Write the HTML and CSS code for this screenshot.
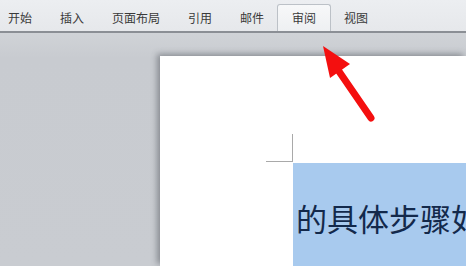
FILE: index.html
```html
<!DOCTYPE html>
<html lang="zh-CN">
<head>
    <meta charset="UTF-8">
    <meta name="viewport" content="width=device-width, initial-scale=1.0">
    <title>审阅</title>
    <link rel="stylesheet" href="styles.css">
</head>
<body>
    <div class="ribbon">
        <div class="tab">开始</div>
        <div class="tab">插入</div>
        <div class="tab">页面布局</div>
        <div class="tab">引用</div>
        <div class="tab">邮件</div>
        <div class="tab active">审阅</div>
        <div class="tab">视图</div>
    </div>
    <div class="workspace">
        <div class="page">
            <div class="crop-mark"></div>
            <div class="selection">的具体步骤如</div>
        </div>
    </div>

    <svg class="arrow" width="466" height="266" viewBox="0 0 466 266">
        <line x1="371" y1="118" x2="336" y2="67" stroke="#f40f0f" stroke-width="7" stroke-linecap="round"/>
        <polygon points="323,46 350,64 330,78" fill="#f40f0f"/>
    </svg>
</body>
</html>
```

FILE: styles.css
```css
body {
    margin: 0;
    width: 466px;
    height: 266px;
    overflow: hidden;
    font-family: "Noto Sans CJK SC", "Noto Sans", sans-serif;
    background: #c9ccd1;
}
.ribbon {
    display: flex;
    align-items: flex-end;
    height: 31px;
    margin-left: -7px;
    background: linear-gradient(#eceef1, #e6e8eb);
    border-bottom: 2px solid #8b8f95;
}
.tab {
    height: 26px;
    line-height: 25px;
    padding: 0 14px;
    font-size: 12px;
    color: #3a3a3a;
    border: 1px solid transparent;
    border-bottom: none;
    margin-right: -2px;
}
.tab.active {
    background: linear-gradient(#f7f8f9, #eef0f2);
    border-color: #bcc1c7;
    border-radius: 3px 3px 0 0;
}
.workspace {
    height: 233px;
    padding: 23px 0 0 160px;
    box-sizing: border-box;
    background: linear-gradient(#d0d3d7, #c8cbd0 25px, #c9ccd1);
}
.page {
    height: 100%;
    background: #ffffff;
    padding-top: 78px;
    box-sizing: border-box;
    overflow: hidden;
    box-shadow: -3px -2px 6px rgba(60, 64, 70, 0.45);
}
.crop-mark {
    width: 26px;
    height: 27px;
    margin-left: 106px;
    border-right: 1px solid #a9a9a9;
    border-bottom: 1px solid #a9a9a9;
}
.selection {
    margin: 1px 0 0 133px;
    height: 104px;
    padding: 36px 0 0 3px;
    box-sizing: border-box;
    background: #a8caee;
    font-size: 31px;
    line-height: 37px;
    color: #13294b;
    white-space: nowrap;
    overflow: hidden;
}
.arrow {
    position: absolute;
    left: 0;
    top: 0;
}
```
